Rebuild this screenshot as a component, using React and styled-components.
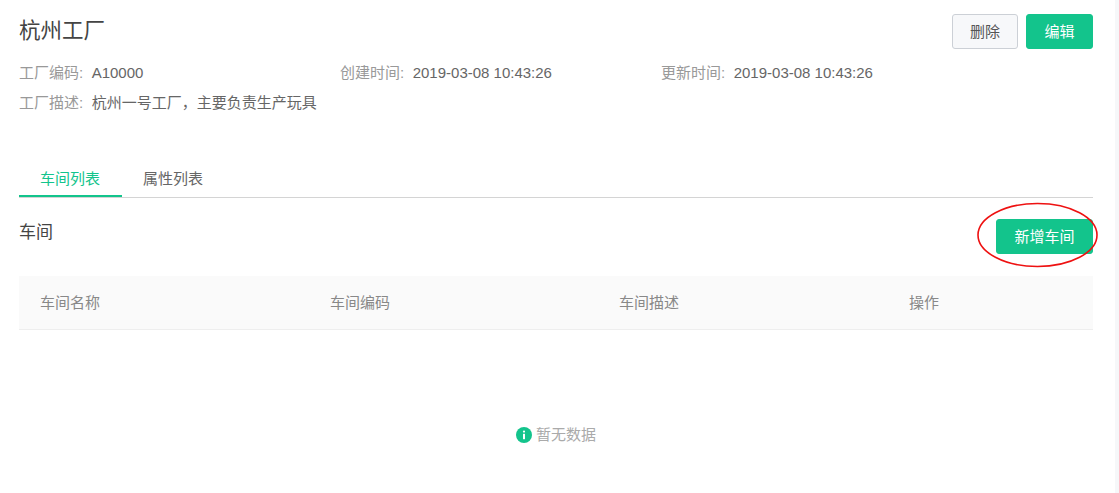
import styled, { createGlobalStyle } from "styled-components";

const GREEN = "#13c48c";

const GlobalStyle = createGlobalStyle`
  html, body {
    margin: 0;
    padding: 0;
    background: #f6f7f9;
  }
  body {
    font-family: "Liberation Sans", "Noto Sans CJK SC", sans-serif;
  }
`;

const Page = styled.div`
  width: 1115px;
  height: 493px;
  box-sizing: border-box;
  background: #fff;
  padding: 14px 22px 0 19px;
  overflow: hidden;
`;

const Header = styled.div`
  display: flex;
  justify-content: space-between;
  align-items: flex-start;
  height: 36px;
`;

const Title = styled.h1`
  margin: 0;
  font-size: 21.5px;
  line-height: 35px;
  font-weight: 400;
  color: #444;
`;

const Actions = styled.div`
  display: flex;
  gap: 8px;
`;

const Button = styled.button`
  box-sizing: border-box;
  width: ${(p) => p.$width || 66}px;
  height: 35px;
  padding: 0 0 2px;
  border-radius: 3px;
  border: 1px solid ${(p) => (p.$primary ? GREEN : "#ccd0d6")};
  background: ${(p) => (p.$primary ? GREEN : "#f7f8fa")};
  color: ${(p) => (p.$primary ? "#fff" : "#555")};
  font-family: inherit;
  font-size: 15px;
`;

const Meta = styled.div`
  padding-top: 6px;
`;

const MetaRow = styled.div`
  display: flex;
  height: 30px;
  align-items: center;
  font-size: 15px;
`;

const MetaItem = styled.div`
  width: 321px;
  white-space: nowrap;
`;

const MetaLabel = styled.span`
  color: #999;
  margin-right: 8.5px;
`;

const MetaValue = styled.span`
  color: #666;
`;

const Tabs = styled.div`
  display: flex;
  margin-top: 45px;
  height: 36px;
  border-bottom: 1px solid #d4d4d4;
`;

const Tab = styled.div`
  width: 103px;
  height: 36px;
  box-sizing: border-box;
  font-size: 15px;
  line-height: 35px;
  text-align: center;
  padding-right: 1px;
  color: ${(p) => (p.$active ? GREEN : "#666")};
  border-bottom: ${(p) => (p.$active ? `2px solid ${GREEN}` : "none")};
  margin-bottom: -1px;
`;

const SectionBar = styled.div`
  position: relative;
  display: flex;
  justify-content: space-between;
  align-items: flex-start;
  height: 78px;
  padding-top: 21px;
  box-sizing: border-box;
`;

const SectionTitle = styled.h2`
  margin: 0;
  font-size: 17px;
  line-height: 28px;
  font-weight: 400;
  color: #444;
`;

const Ellipse = styled.svg`
  position: absolute;
  left: 957px;
  top: 4px;
  width: 124px;
  height: 68px;
`;

const TableHead = styled.div`
  display: grid;
  grid-template-columns: 290px 289px 290px 1fr;
  height: 51px;
  padding: 0 0 2px 21px;
  align-items: center;
  background: #fafafa;
  border-bottom: 1px solid #eee;
  font-size: 15px;
  color: #888;
`;

const Empty = styled.div`
  display: flex;
  justify-content: center;
  align-items: center;
  gap: 4px;
  margin-top: 93px;
  font-size: 15px;
  line-height: 24px;
  color: #aaa;
`;

const InfoIcon = () => (
  <svg width="16" height="16" viewBox="0 0 16 16">
    <circle cx="8" cy="8" r="8" fill={GREEN} />
    <circle cx="8" cy="4.6" r="1.1" fill="#fff" />
    <rect x="7" y="6.8" width="2" height="5.4" fill="#fff" />
  </svg>
);

const meta = [
  ["工厂编码:", "A10000"],
  ["创建时间:", "2019-03-08 10:43:26"],
  ["更新时间:", "2019-03-08 10:43:26"],
];

const columns = ["车间名称", "车间编码", "车间描述", "操作"];

export default function App() {
  return (
    <>
      <GlobalStyle />
      <Page>
        <Header>
          <Title>杭州工厂</Title>
          <Actions>
            <Button>删除</Button>
            <Button $primary $width={67}>编辑</Button>
          </Actions>
        </Header>
        <Meta>
          <MetaRow>
            {meta.map(([label, value]) => (
              <MetaItem key={label}>
                <MetaLabel>{label}</MetaLabel>
                <MetaValue>{value}</MetaValue>
              </MetaItem>
            ))}
          </MetaRow>
          <MetaRow>
            <MetaItem>
              <MetaLabel>工厂描述:</MetaLabel>
              <MetaValue>杭州一号工厂，主要负责生产玩具</MetaValue>
            </MetaItem>
          </MetaRow>
        </Meta>
        <Tabs>
          <Tab $active>车间列表</Tab>
          <Tab>属性列表</Tab>
        </Tabs>
        <SectionBar>
          <SectionTitle>车间</SectionTitle>
          <Button $primary $width={97}>
            新增车间
          </Button>
          <Ellipse viewBox="0 0 124 68">
            <ellipse cx="61.5" cy="33" rx="59.5" ry="31.5" fill="none" stroke="#ee1111" strokeWidth="1.6" />
          </Ellipse>
        </SectionBar>
        <TableHead>
          {columns.map((c) => (
            <div key={c}>{c}</div>
          ))}
        </TableHead>
        <Empty>
          <InfoIcon />
          暂无数据
        </Empty>
      </Page>
    </>
  );
}
